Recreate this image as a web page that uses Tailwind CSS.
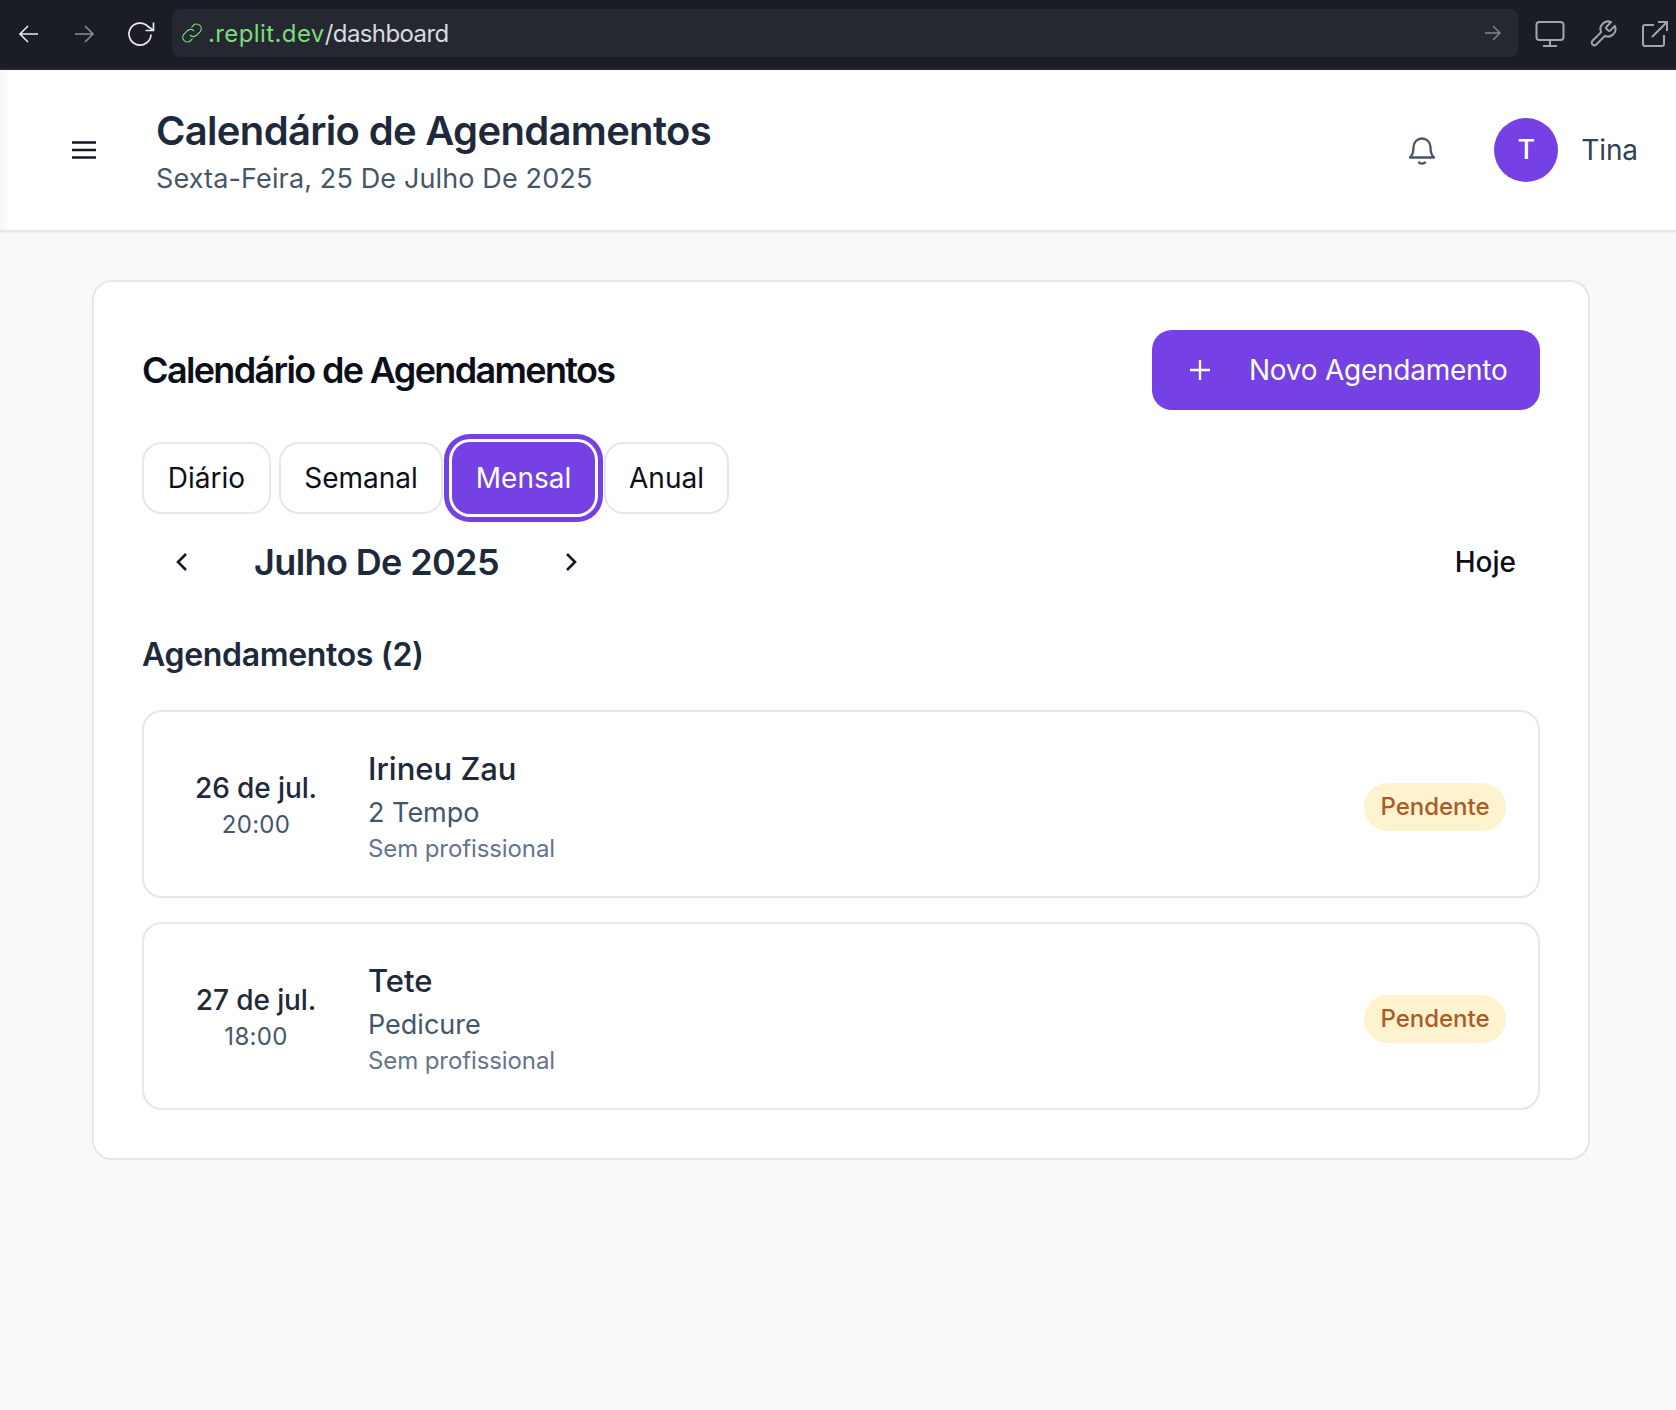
<!DOCTYPE html>
<html lang="pt-BR">
<head>
  <meta charset="UTF-8">
  <title>Calendário de Agendamentos</title>
  <script src="https://cdn.jsdelivr.net/npm/@tailwindcss/browser@4"></script>
</head>
<body class="bg-[#f8f9fb] h-[1410px] overflow-hidden font-['Inter',sans-serif]">

  <!-- browser bar -->
  <div class="h-[70px] bg-[#1a1d26] border-b-2 border-[#262932] flex items-start">
    <div class="w-[172px] h-[68px] flex items-center shrink-0">
      <svg class="ml-[18px] w-[22px] h-[22px] text-[#e8e8ea]" viewBox="0 0 22 22" fill="none" stroke="currentColor" stroke-width="1.6"><path d="M20 11H2M10 3l-8 8 8 8"/></svg>
      <svg class="ml-[33px] w-[22px] h-[22px] text-[#8b8d94]" viewBox="0 0 22 22" fill="none" stroke="currentColor" stroke-width="1.6"><path d="M2 11h18M12 3l8 8-8 8"/></svg>
      <svg class="ml-[31px] w-[30px] h-[30px] text-[#e8e8ea]" viewBox="0 0 30 30" fill="none" stroke="currentColor" stroke-width="1.7"><path d="M25 15.5A11 11 0 1 1 22 7.5L27 11"/><path d="M27.500 3.500V11.500H19.500"/></svg>
    </div>
    <div class="mt-[9px] w-[1346px] h-[48px] bg-[#252830] rounded-[8px] flex items-center">
      <svg class="ml-[8px] w-[24px] h-[24px] text-[#7bdc7e]" viewBox="0 0 24 24" fill="none" stroke="currentColor" stroke-width="1.2"><path d="M10 14a4.500 4.500 0 0 0 6.500.3l3.500-3.500a4.600 4.600 0 0 0-6.500-6.500l-2 2"/><path d="M14 10a4.500 4.500 0 0 0-6.500-.3L4 13.200a4.600 4.600 0 0 0 6.500 6.500l2-2"/></svg>
      <span class="ml-[4px] mt-[2px] text-[24px] leading-none tracking-[0.4px] text-[#7bdc7e]">.replit.dev<span class="tracking-[-0.6px] text-[#d9dadd]">/dashboard</span></span>
      <svg class="ml-auto mr-[16px] w-[18px] h-[18px] text-[#85878e]" viewBox="0 0 18 18" fill="none" stroke="currentColor" stroke-width="1.4"><path d="M1 9h15M9 2l7 7-7 7"/></svg>
    </div>
    <div class="flex items-center h-[68px] pl-[17px] gap-[23px] text-[#a3a5ab]">
      <svg class="w-[30px] h-[28px]" viewBox="0 0 30 28" fill="none" stroke="currentColor" stroke-width="2"><rect x="1.500" y="2" width="27" height="18" rx="3"/><path d="M15 20v6M8 26h14"/></svg>
      <svg class="w-[30px] h-[30px]" viewBox="0 0 24 24" fill="none" stroke="currentColor" stroke-width="1.600" stroke-linecap="round" stroke-linejoin="round"><path d="M14.700 6.300a1 1 0 0 0 0 1.400l1.600 1.600a1 1 0 0 0 1.400 0l3.770-3.770a6 6 0 0 1-7.940 7.940l-6.910 6.910a2.120 2.120 0 0 1-3-3l6.910-6.910a6 6 0 0 1 7.940-7.940l-3.760 3.760z"/></svg>
      <svg class="w-[28px] h-[28px]" viewBox="0 0 28 28" fill="none" stroke="currentColor" stroke-width="2"><path d="M13 5H4a2 2 0 0 0-2 2v17a2 2 0 0 0 2 2h17a2 2 0 0 0 2-2v-9"/><path d="M11 17 26 2M17 2h9v9"/></svg>
    </div>
  </div>

  <!-- header -->
  <header class="h-[162px] bg-white border-b-2 border-[#e5e7eb] shadow-[inset_14px_0_14px_-12px_rgba(0,0,0,0.06),0_1px_2px_rgba(0,0,0,0.05)] flex items-center pl-[71px] pr-[38px]">
    <svg class="w-[26px] h-[20px] text-[#111827] shrink-0" viewBox="0 0 26 20" fill="none" stroke="currentColor" stroke-width="2.600"><path d="M1 2.500h24M1 10h24M1 17.500h24"/></svg>
    <div class="ml-[59px] mt-[6px]">
      <h1 class="text-[40px] leading-[48px] font-semibold tracking-[-0.68px] text-[#1e293b]">Calendário de Agendamentos</h1>
      <p class="mt-[4px] text-[27px] leading-[40px] tracking-[0.13px] text-[#475569]">Sexta-Feira, 25 De Julho De 2025</p>
    </div>
    <svg class="ml-auto -mt-[1px] w-[28px] h-[32px] text-[#475569]" viewBox="0 0 28 32" fill="none" stroke="currentColor" stroke-width="2.300" stroke-linecap="round" stroke-linejoin="round"><path d="M2 23.500c2.500-2 3.500-4 3.500-10.500a8.500 8.500 0 0 1 17 0c0 6.500 1 8.500 3.500 10.500z"/><path d="M11 28.500c2 1.500 4 1.500 6 0"/></svg>
    <div class="ml-[58px] w-[64px] h-[64px] rounded-full bg-[#7540e4] text-white flex items-center justify-center text-[27px] font-medium">T</div>
    <span class="ml-[23px] text-[28px] tracking-[-0.1px] text-[#334155]">Tina</span>
  </header>

  <!-- main card -->
  <main class="pl-[92px] pr-[86px] pt-[48px]">
    <section class="h-[880px] bg-white border-2 border-[#e5e7eb] rounded-[20px] px-[48px] pt-[48px]">
      <div class="flex items-center justify-between h-[80px]">
        <h2 class="text-[36px] font-semibold tracking-[-1.65px] text-[#0b0f1a]">Calendário de Agendamentos</h2>
        <button class="w-[388px] h-[80px] rounded-[20px] bg-[#7540e4] text-white flex items-center pl-[36px] text-[28px] tracking-[-0.25px]">
          <svg class="w-[24px] h-[24px]" viewBox="0 0 24 24" fill="none" stroke="currentColor" stroke-width="2.400"><path d="M12 2v20M2 12h20"/></svg>
          <span class="ml-[37px]">Novo Agendamento</span>
        </button>
      </div>

      <div class="flex items-center mt-[32px] text-[28px] text-[#0b0f1a]">
        <button class="w-[129px] h-[72px] rounded-[20px] border-2 border-[#e5e7eb]">Diário</button>
        <button class="ml-[8px] w-[164px] h-[72px] rounded-[20px] border-2 border-[#e5e7eb]">Semanal</button>
        <button class="ml-[9px] w-[143px] h-[72px] rounded-[18px] bg-[#7540e4] text-white ring-offset-[3px] ring-offset-white ring-[5px] ring-[#7540e4]">Mensal</button>
        <button class="ml-[9px] w-[125px] h-[72px] rounded-[20px] border-2 border-[#e5e7eb]">Anual</button>
      </div>

      <div class="flex items-center mt-[12px] h-[72px]">
        <svg class="ml-[28px] w-[24px] h-[24px] text-[#111827]" viewBox="0 0 24 24" fill="none" stroke="currentColor" stroke-width="2.600"><path d="M16 4l-8 8 8 8"/></svg>
        <span class="ml-[60px] text-[36px] font-semibold tracking-[-0.62px] text-[#1e293b]">Julho De 2025</span>
        <svg class="ml-[60px] w-[24px] h-[24px] text-[#111827]" viewBox="0 0 24 24" fill="none" stroke="currentColor" stroke-width="2.600"><path d="M8 4l8 8-8 8"/></svg>
        <span class="ml-auto mr-[24px] text-[28px] font-medium text-[#0b0f1a]">Hoje</span>
      </div>

      <h3 class="mt-[33px] text-[32px] leading-[48px] font-semibold tracking-[-0.33px] text-[#1e293b]">Agendamentos (2)</h3>

      <div class="mt-[31px] flex flex-col gap-[24px]">
        <article class="h-[188px] rounded-[20px] border-2 border-[#e2e8f0] flex items-center pl-[32px] pr-[32px]">
          <div class="w-[160px] text-center">
            <div class="text-[28px] leading-[40px] font-medium tracking-[-0.1px] text-[#1e293b]">26 de jul.</div>
            <div class="mt-[1px] text-[24px] leading-[32px] tracking-[0.3px] text-[#475569]">20:00</div>
          </div>
          <div class="ml-[32px] mt-[3px]">
            <div class="text-[31px] leading-[44px] font-medium text-[#1e293b]">Irineu Zau</div>
            <div class="mt-[2px] text-[27px] leading-[40px] text-[#475569]">2 Tempo</div>
            <div class="text-[24px] leading-[32px] tracking-[-0.1px] text-[#64748b]">Sem profissional</div>
          </div>
          <span class="ml-auto mt-[6px] w-[142px] h-[48px] rounded-full bg-[#fdf3cf] text-[#ad5a26] text-[24px] font-medium flex items-center justify-center">Pendente</span>
        </article>
        <article class="h-[188px] rounded-[20px] border-2 border-[#e2e8f0] flex items-center pl-[32px] pr-[32px]">
          <div class="w-[160px] text-center">
            <div class="text-[28px] leading-[40px] font-medium tracking-[-0.1px] text-[#1e293b]">27 de jul.</div>
            <div class="mt-[1px] text-[24px] leading-[32px] tracking-[0.3px] text-[#475569]">18:00</div>
          </div>
          <div class="ml-[32px] mt-[3px]">
            <div class="text-[31px] leading-[44px] font-medium text-[#1e293b]">Tete</div>
            <div class="mt-[2px] text-[27px] leading-[40px] text-[#475569]">Pedicure</div>
            <div class="text-[24px] leading-[32px] tracking-[-0.1px] text-[#64748b]">Sem profissional</div>
          </div>
          <span class="ml-auto mt-[6px] w-[142px] h-[48px] rounded-full bg-[#fdf3cf] text-[#ad5a26] text-[24px] font-medium flex items-center justify-center">Pendente</span>
        </article>
      </div>
    </section>
  </main>
</body>
</html>
